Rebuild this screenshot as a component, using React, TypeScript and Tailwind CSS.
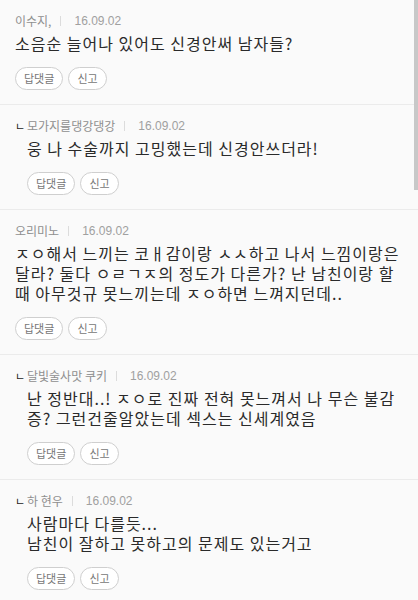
import React from "react";

type Comment = {
  id: number;
  name: string;
  date: string;
  lines: string[];
  reply?: boolean;
};

const comments: Comment[] = [
  {
    id: 1,
    name: "이수지,",
    date: "16.09.02",
    lines: ["소음순 늘어나 있어도 신경안써 남자들?"],
  },
  {
    id: 2,
    name: "모가지를댕강댕강",
    date: "16.09.02",
    lines: ["웅 나 수술까지 고밍했는데 신경안쓰더라!"],
    reply: true,
  },
  {
    id: 3,
    name: "오리미노",
    date: "16.09.02",
    lines: [
      "ㅈㅇ해서 느끼는 코ㅐ감이랑 ㅅㅅ하고 나서 느낌이랑은 달라? 둘다 ㅇㄹㄱㅈ의 정도가 다른가? 난 남친이랑 할때 아무것규 못느끼는데 ㅈㅇ하면 느껴지던데..",
    ],
  },
  {
    id: 4,
    name: "달빛술사맛 쿠키",
    date: "16.09.02",
    lines: ["난 정반대..! ㅈㅇ로 진짜 전혀 못느껴서 나 무슨 불감증? 그런건줄알았는데 섹스는 신세계였음"],
    reply: true,
  },
  {
    id: 5,
    name: "하 현우",
    date: "16.09.02",
    lines: ["사람마다 다를듯...", "남친이 잘하고 못하고의 문제도 있는거고"],
    reply: true,
  },
];

function Pill({ label }: { label: string }) {
  return (
    <button className="h-[23px] px-2 rounded-full border border-[#cfcfcf] bg-white text-[11px] text-[#777] leading-none">
      {label}
    </button>
  );
}

function CommentRow({ c }: { c: Comment }) {
  return (
    <div className="flex border-b border-[#ebebeb] pl-[15px] pr-[8px] pt-[14px] pb-[14px]">
      {c.reply && (
        <div className="w-[12px] shrink-0 h-[14px] flex items-center text-[11px] text-[#222] leading-none">
          ㄴ
        </div>
      )}
      <div className="flex-1 min-w-0">
        <div className="flex items-center h-[14px] text-[12px] leading-none">
          <span className="text-[#8f8f8f]">{c.name}</span>
          <span className="ml-[9px] mr-[13px] w-px h-[10px] bg-[#dcdcdc]" />
          <span className="text-[#a0a0a0] font-['Liberation_Sans',sans-serif]">{c.date}</span>
        </div>
        <div className="mt-[5px] text-[16px] leading-[20px] tracking-[1px] text-[#2a2a2a] break-all">
          {c.lines.map((l, i) => (
            <p key={i}>{l}</p>
          ))}
        </div>
        <div className="mt-[14px] flex gap-[5px]">
          <Pill label="답댓글" />
          <Pill label="신고" />
        </div>
      </div>
    </div>
  );
}

export default function App() {
  return (
    <div className="relative w-[418px] h-[600px] overflow-hidden bg-[#fafafa] font-['Noto_Sans_CJK_KR','Noto_Sans',sans-serif]">
      {comments.map((c) => (
        <CommentRow key={c.id} c={c} />
      ))}
      <div className="absolute right-0 top-0 w-[4px] h-[190px] bg-[#c8c8c8]" />
    </div>
  );
}
